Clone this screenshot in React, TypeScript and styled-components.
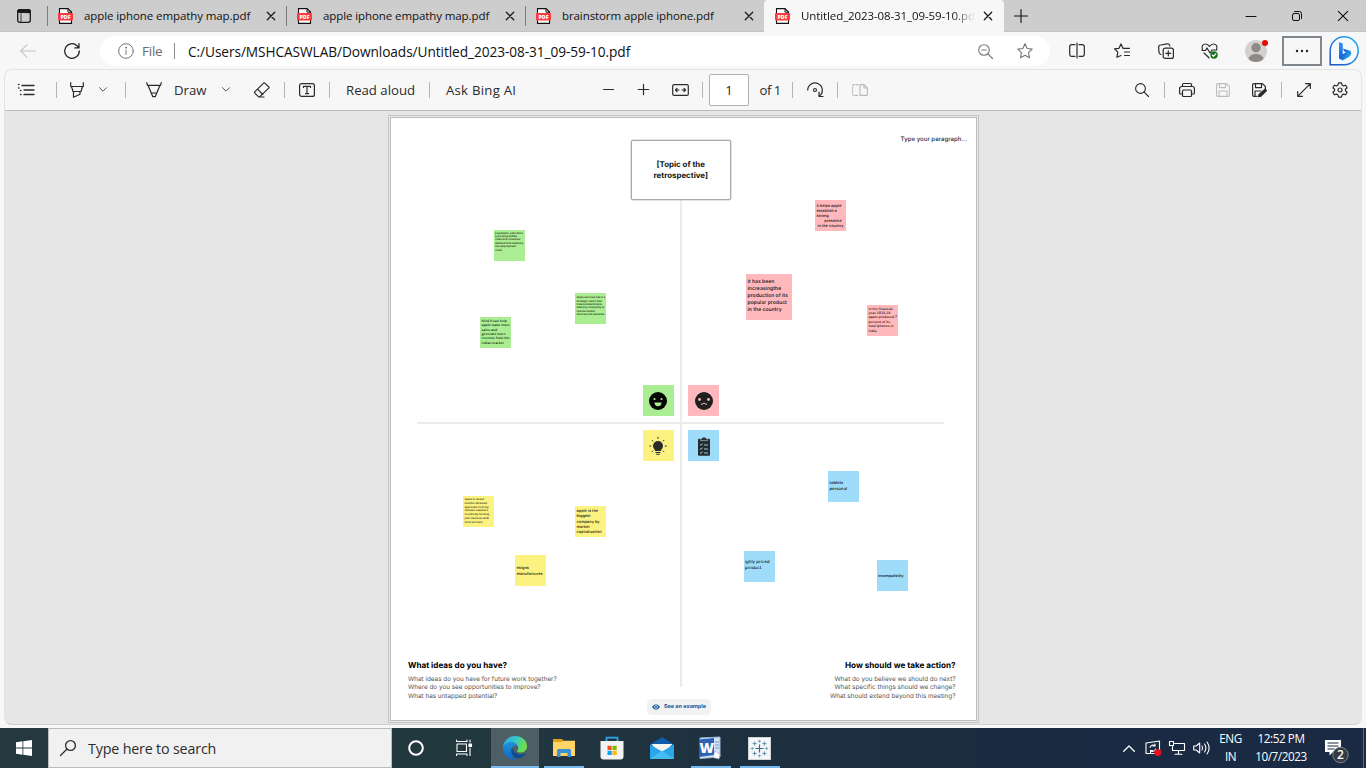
import React from 'react';
import styled, { createGlobalStyle, css } from 'styled-components';

const Global = createGlobalStyle`
  * { box-sizing: border-box; }
  html, body { margin: 0; padding: 0; overflow: hidden; }
  body { font-family: "Open Sans", "Noto Sans", sans-serif; color: #1b1b1b; }
  svg { display: block; flex: none; overflow: visible; }
`;

const Window = styled.div`
  width: 1366px; height: 768px; display: flex; flex-direction: column;
  background: #f7f7f7; overflow: hidden;
`;

/* ---------- generic pieces ---------- */
const Cell = styled.div<{ $w: number; $ml?: number; $color?: string }>`
  width: ${p => p.$w}px; margin-left: ${p => p.$ml ?? 0}px; flex: none; height: 100%;
  display: flex; align-items: center; justify-content: center;
  color: ${p => p.$color ?? '#2b2b2b'};
`;
const Spacer = styled.div`flex: 1;`;
const Rule = styled.i<{ $h: number; $color?: string }>`
  width: 1px; height: ${p => p.$h}px; background: ${p => p.$color ?? '#b5b5b5'}; flex: none;
`;

type IconProps = { w?: number; h?: number; sw?: number; children: React.ReactNode };
const Icon = ({ w = 16, h, sw = 1.1, children }: IconProps) => (
  <svg width={w} height={h ?? w} viewBox={`0 0 ${w} ${h ?? w}`} fill="none" stroke="currentColor"
    strokeWidth={sw} strokeLinecap="round" strokeLinejoin="round">{children}</svg>
);
const CloseIcon = () => <Icon w={8} sw={1.3}><path d="M.3.3l7.4 7.4M7.7.3L.3 7.7" /></Icon>;
const Chevron = () => <Icon w={8} h={5} sw={1}><path d="M.5.7L4 4.2 7.500.7" /></Icon>;

/* ---------- tab strip ---------- */
const TabStrip = styled.div`
  height: 32px; flex: none; display: flex; background: #cdcdcd;
  box-shadow: inset 0 -1px 0 #c3c3c3;
`;
const Tab = styled.div<{ $active?: boolean }>`
  width: ${p => (p.$active ? 240 : 239)}px; height: 32px; flex: none; display: flex; align-items: center;
  ${p => p.$active
    ? css`background: #f7f7f7; border-radius: 4px 4px 0 0; padding-left: 11px;`
    : css`padding-left: 0;`}
`;
const TabDivider = styled.i`width: 1px; height: 20px; background: #7c7c7c; margin-right: 10px;`;
const TabTitle = styled.span<{ $fade?: boolean; $ls: number }>`
  width: 174px; margin-left: 10px; font-size: 11.5px; line-height: 20px; white-space: nowrap; overflow: hidden;
  letter-spacing: ${p => p.$ls}px; color: #111; flex: none; padding-bottom: 1px;
  ${p => p.$fade && css`
    width: 174px;
    mask-image: linear-gradient(90deg, #000 152px, transparent 174px);
  `}
`;
const TabClose = styled.span`width: 26px; display: flex; justify-content: center;`;

const PdfIcon = () => (
  <svg width="16" height="16" viewBox="0 0 16 16">
    <path d="M1.500.6H10l3.500 3.500V15.400H1.500z" fill="#fff" stroke="#111" strokeWidth="1.100" />
    <path d="M10 .6v3.600h3.600" fill="none" stroke="#111" />
    <rect x="0" y="5" width="15" height="7.500" rx="1" fill="#fb3b3b" />
    <text x="7.500" y="10.700" fontSize="5.200" fontWeight="800" fill="#fff" textAnchor="middle"
      fontFamily="Open Sans">PDF</text>
  </svg>
);

/* ---------- address row ---------- */
const AddressRow = styled.div`height: 38px; flex: none; display: flex; align-items: center; padding-bottom: 0;`;
const AddressBar = styled.div`
  width: 950px; height: 30px; margin-left: 12px; border-radius: 15px; background: #fff;
  display: flex; align-items: center; padding: 0 5px 0 12px; flex: none;
`;
const FileLabel = styled.span`width: 34px; padding-left: 2px; font-size: 13.5px; letter-spacing: -.25px; color: #6a6a6a;`;
const Url = styled.span`
  padding-left: 13px; font-size: 13.7px; letter-spacing: -.08px; color: #111; white-space: nowrap;
`;
const MoreButton = styled.div`
  width: 40px; height: 30px; margin-left: 3px; border: 2px solid #7f868d; background: #f7f7f7; flex: none;
  display: flex; align-items: center; justify-content: center;
`;

/* ---------- pdf viewer ---------- */
const Viewer = styled.div`
  height: 656px; margin: -1px 4px 0; flex: none; border: 1px solid #e3e3e3; border-bottom-color: #cfcfcf;
  border-radius: 8px; overflow: hidden; display: flex; flex-direction: column; background: #e6e6e6;
`;
const PdfBar = styled.div`
  height: 41px; flex: none; display: flex; align-items: center; background: #f7f7f7;
  border-bottom: 1px solid #bdbdbd; padding-right: 3px; padding-bottom: 1px;
`;
const BarText = styled.span<{ $w: number; $pl?: number; $ls?: number }>`
  width: ${p => p.$w}px; padding-left: ${p => p.$pl ?? 0}px; flex: none; white-space: nowrap;
  font-size: 13.2px; letter-spacing: ${p => p.$ls ?? 0}px; color: #2b2b2b;
`;
const PageInput = styled.div`
  width: 40px; height: 32px; margin-left: 4px; border: 1px solid #b0b0b0; border-radius: 2px; background: #fff;
  display: flex; align-items: center; justify-content: center; font-size: 13px; flex: none;
`;
const Scroll = styled.div`flex: 1; display: flex; justify-content: center; align-items: flex-start; padding: 4px 0 0; `;
const PaperFrame = styled.div`
  width: 591px; height: 608px; margin-left: 0; border: 1px solid #c4c4c4; padding: 1px; background: #e9e9e9; flex: none;
`;
const Paper = styled.div`
  width: 100%; height: 100%; position: relative; background: #fff; border: 1px solid #bcbcbc;
  font-family: "Inter", "Liberation Sans", sans-serif; color: #111; text-rendering: geometricPrecision;
  display: flex; flex-direction: column; justify-content: flex-end;
`;
/* Items on the board sit at free canvas coordinates measured from the page corner. */
const OnBoard = styled.div<{ $x: number; $y: number; $w: number; $h: number }>`
  position: absolute; left: ${p => p.$x - 390.5}px; top: ${p => p.$y - 118}px;
  width: ${p => p.$w}px; height: ${p => p.$h}px;
`;
const Axis = styled(OnBoard)`background: #ebebeb;`;
const Topic = styled(OnBoard)`
  border: 1px solid #a9a9a9; box-shadow: 0 0 0 .5px #c9c9c9; border-radius: 2px; background: #fff;
  display: flex; align-items: center; justify-content: center; text-align: center;
  font-size: 7.9px; line-height: 11px; font-weight: 700;
`;
const Hint = styled(OnBoard)`
  font-size: 6.1px; line-height: 10px; text-align: right; color: #222b4a; white-space: nowrap; font-weight: 500;
`;
const Note = styled(OnBoard)<{ $bg: string; $fs: number; $lh: number; $pt: number }>`
  background: ${p => p.$bg}; padding: ${p => p.$pt}px 0 0 1.5px; white-space: pre;
  font-size: ${p => p.$fs}px; line-height: ${p => p.$lh}px; font-weight: 600; color: rgba(0, 0, 0, .85);
`;
const Tile = styled(OnBoard)<{ $bg: string }>`
  background: ${p => p.$bg}; display: flex; align-items: center; justify-content: center;
`;
const Prompts = styled.div`display: flex; justify-content: space-between; padding: 0 20px 0 17.5px; height: 40px; margin-bottom: 20px;`;
const Prompt = styled.div<{ $right?: boolean }>`
  text-align: ${p => (p.$right ? 'right' : 'left')}; font-size: 6.35px; line-height: 8.5px; color: #555; white-space: pre-line;
`;
const PromptTitle = styled.div`font-size: 8.15px; line-height: 10px; font-weight: 700; color: #000; margin-bottom: 4.500px;`;
const Example = styled(OnBoard)`
  border-radius: 5px; background: #f1f2f3; display: flex; align-items: center; justify-content: center; gap: 4px;
  font-size: 5.5px; font-weight: 700; color: #14599a; white-space: nowrap;
`;

const GREEN = '#aaed92', PINK = '#ffb8bb', YELLOW = '#fcf281', BLUE = '#9edcfa';
type NoteData = [number, number, number, string, number, number, number, string];
const notes: NoteData[] = [
  [493.5, 230, 31, GREEN, 2.65, 3.35, 1.8, 'population ,education\na growing middle\nclass and consumer\ndemand and relatively\nlow employment\ncosts'],
  [575, 293, 31, GREEN, 2.65, 3.4, 3.2, 'apple services lies in a\nstrategic vision that\ntranscended simple\ndesiring computing to\nremote mobile\ndevices and wearable'],
  [480, 317, 31, GREEN, 3.4, 4.4, 1.8, 'third it can help\napple make more\nsales and\ngenerate more\nrevenue from the\nindian market'],
  [815, 200, 31, PINK, 3.9, 5, 3, 'it helps apple\nestablish a\nstrong\n        presence\n in the country'],
  [746, 273.5, 46, PINK, 5.1, 7, 5, 'it has been\nincreasingthe\nproduction of its\npopular product\nin the country'],
  [867, 304.5, 31, PINK, 3.4, 4.4, 2, 'in the financial\nyear 2023,23\napple produced 7\npercent of its\ntotal iphones in\nindia'],
  [463, 496, 31, YELLOW, 2.75, 3.75, 2, 'apple in recent\nmonths obtained\napprovals to bring\nchinese suppliers\nto india by forming\njoint ventures with\nlocal partners'],
  [575, 506, 31, YELLOW, 3.9, 5.3, 2, 'apple is the\nbiggest\ncompany by\nmarket\ncapitalization'],
  [515, 555, 31, YELLOW, 3.9, 6, 9.5, 'esigns\nmanufactures'],
  [828, 471, 31, BLUE, 4.2, 6, 9.5, 'tablets\npersonal'],
  [743.5, 550.5, 31, BLUE, 4.3, 6, 9.5, 'ighly priced\nproduct'],
  [876.5, 559.5, 31, BLUE, 3.6, 6, 13, 'incompatibility'],
];

const Happy = () => (
  <svg width="18" height="18" viewBox="0 0 18 18">
    <circle cx="9" cy="9" r="9" fill="#050505" />
    <circle cx="5.500" cy="7" r="1.100" fill={GREEN} /><circle cx="12.500" cy="7" r="1.100" fill={GREEN} />
    <path d="M5.500 10.500h7a3.500 3.700 0 0 1-7 0z" fill={GREEN} />
  </svg>
);
const Sad = () => (
  <svg width="18" height="18" viewBox="0 0 18 18">
    <circle cx="9" cy="9" r="9" fill="#1f1f1f" />
    <circle cx="4.500" cy="7.500" r="1.400" fill={PINK} /><circle cx="13.500" cy="7.500" r="1.400" fill={PINK} />
    <path d="M6 12.500q3-2.600 6 0" fill="none" stroke={PINK} strokeWidth="1" />
  </svg>
);
const Bulb = () => (
  <svg width="18" height="18" viewBox="0 0 18 18" fill="#2b2b2b" stroke="#2b2b2b">
    <path d="M9 4a5 5 0 0 0-5 5c0 2.300 1.800 3.200 2.200 5h5.600c.4-1.800 2.200-2.700 2.200-5a5 5 0 0 0-5-5z" stroke="none" />
    <path d="M6.500 15.500h5M7.200 17.300h3.600" strokeWidth="1" />
    <path d="M9-.2v2.200M.2 9h2.100M15.700 9h2.100M2.800 3l1.400 1.400M15.200 3l-1.400 1.400M2.800 15l1.400-1.400M15.200 15l-1.400-1.400" strokeWidth=".9" />
  </svg>
);
const Clipboard = () => (
  <svg width="14" height="20" viewBox="0 0 14 20">
    <rect x="1" y="2.800" width="12" height="17" rx="1" fill="#262b2e" />
    <path d="M3.500 4.600V2.400h1.600a2 2 0 0 1 3.800 0h1.600v2.200z" fill="#262b2e" stroke={BLUE} strokeWidth=".6" />
    <path d="M3 8.500l1 .9 1.500-1.800M7 9h4M3 12.500l1 .9 1.500-1.800M7 13h4M3 16.500l1 .9 1.500-1.800M7 17h4" fill="none" stroke={BLUE} strokeWidth=".9" />
  </svg>
);

/* ---------- taskbar ---------- */
const Taskbar = styled.div`
  height: 40px; margin-top: auto; flex: none; display: flex; color: #fff;
  background: linear-gradient(90deg, #23393f 0%, #22383f 35%, #1d303f 55%, #1a2a42 80%, #1a2a43 100%);
`;
const SearchBox = styled.div`
  width: 344px; height: 40px; background: #f1f1f1; border: 1px solid #b9bcbd; display: flex; align-items: center; flex: none;
  padding-left: 11px; font-size: 14.3px; letter-spacing: -.18px; color: #2d2d2d; gap: 12px;
`;
const TaskItem = styled.div<{ $w: number; $ml?: number; $open?: boolean; $active?: boolean; $shift?: number }>`
  width: ${p => p.$w}px; margin-left: ${p => p.$ml ?? 0}px; height: 40px; flex: none;
  display: flex; align-items: center; justify-content: center; padding-right: ${p => p.$shift ?? 0}px;
  background: ${p => (p.$active ? '#4d5f65' : 'transparent')};
  box-shadow: ${p => (p.$open ? 'inset 0 -2px 0 #76b9ed' : 'none')};
`;
const TrayText = styled.div<{ $w: number }>`
  width: ${p => p.$w}px; display: flex; flex-direction: column; justify-content: center; text-align: center; flex: none;
  font-size: 11.7px; line-height: 18px; letter-spacing: -.42px; white-space: nowrap; padding-bottom: 2px;
`;

const Edge = () => (
  <svg width="24" height="24" viewBox="0 0 24 24">
    <defs>
      <linearGradient id="e1" x1="0" y1="0" x2="1" y2=".3"><stop offset="0" stopColor="#2fa5e6" /><stop offset=".5" stopColor="#35c3cf" /><stop offset="1" stopColor="#6be04f" /></linearGradient>
      <linearGradient id="e2" x1="0" y1="0" x2="0" y2="1"><stop offset="0" stopColor="#1d93dd" /><stop offset="1" stopColor="#1265bf" /></linearGradient>
    </defs>
    <path d="M0 11.500C.5 5 5.500 0 12 0c7 0 12 4.800 12 10.200 0 4-3 6.300-6.300 6.300-2.600 0-3.900-.9-3.700-1.700.2-.6 1.200-1 1.200-2.900C15.200 9 12 6.400 8.200 6.400 4.500 6.400 1.500 8.300 0 11.500z" fill="url(#e1)" />
    <path d="M0 12c.7-3.700 4.300-5.700 8.200-5.700 3 0 5.600 1.600 6.600 3.700-1-.7-4-.8-5.600 1.400-2.300 3.100-1.300 9.500 4.200 12.500C6 24.800.1 19.300 0 12z" fill="url(#e2)" />
    <path d="M9.200 11.400c-2.600 4.600.8 12 8 10.700 2.300-.6 4.300-2.300 5.300-4 .3-.6-.2-.9-.7-.6-5 2.500-11.600.3-12.600-6.100z" fill="#0c4d93" />
  </svg>
);
const Folder = () => (
  <svg width="22" height="18" viewBox="0 0 22 18">
    <path d="M0 0h9l1.500 2H22v3H0z" fill="#e3a21a" /><path d="M0 3h9l1-1.300h12V17H0z" fill="#ffd567" />
    <path d="M4 18v-6.500a1.500 1.500 0 0 1 1.500-1.500h11a1.500 1.500 0 0 1 1.500 1.500V18h-3.500v-4h-7v4z" fill="#3a8fd6" />
  </svg>
);
const Store = () => (
  <svg width="24" height="24" viewBox="0 0 24 24">
    <path d="M6.500 6V1.700h11V6" fill="none" stroke="#29a8e8" strokeWidth="1.800" />
    <path d="M.5 5h23v15.500a3 3 0 0 1-3 3h-17a3 3 0 0 1-3-3z" fill="#f3f3f3" />
    <path d="M7.500 9.800h4.200V14H7.500z" fill="#f25022" /><path d="M12.500 9.800h4.200V14h-4.200z" fill="#7fba00" />
    <path d="M7.500 14.800h4.200V19H7.500z" fill="#00a4ef" /><path d="M12.500 14.800h4.200V19h-4.200z" fill="#ffb900" />
  </svg>
);
const Mail = () => (
  <svg width="24" height="22" viewBox="0 0 24 22">
    <path d="M0 7.500L12 0l12 7.500V12H0z" fill="#0f5ca8" /><path d="M1.500 7h21l-7 8h-8z" fill="#f5f5f5" />
    <path d="M0 7.500l12 7 12-7V22H0z" fill="#2aa5e8" /><path d="M0 22L12 13.500 24 22z" fill="#45bdf2" />
  </svg>
);
const Word = () => (
  <svg width="23" height="23" viewBox="0 0 23 23">
    <path d="M2 1l20-1v20l-20 1.500z" fill="#d5e3f5" stroke="#9db8dd" />
    <path d="M17 5h4M17 8h4M17 11h4" stroke="#6f95cc" />
    <path d="M1 2.500L16 1v17L1 20z" fill="#2c62b5" />
    <text x="8.700" y="15.500" fontSize="14" fontWeight="800" fontFamily="Open Sans" fill="#fff" textAnchor="middle">W</text>
    <path d="M17 14l5 3-1 5-6-1.500z" fill="#fff" stroke="#8da9d2" strokeWidth=".7" />
  </svg>
);
const plus = (x: number, y: number, r: number) => `M${x - r} ${y}h${2 * r}M${x} ${y - r}v${2 * r}`;
const Tableau = () => (
  <svg width="23" height="23" viewBox="0 0 23 23" fill="none">
    <rect x=".5" y=".5" width="22" height="22" fill="#f4f6f7" stroke="#cfd6da" />
    <path d={plus(11.5, 11.5, 4)} stroke="#376a8a" strokeWidth="1.200" />
    <path d={[plus(11.5, 4.3, 1.6), plus(11.5, 18.7, 1.6), plus(4.3, 11.5, 1.6), plus(18.7, 11.5, 1.6)].join('')} stroke="#7fa8bf" />
    <path d={[plus(6.6, 6.6, 2), plus(16.4, 6.6, 2), plus(6.6, 16.4, 2), plus(16.4, 16.4, 2)].join('')} stroke="#5b91af" />
  </svg>
);

export default function App() {
  const tabs = ['apple iphone empathy map.pdf', 'apple iphone empathy map.pdf', 'brainstorm apple iphone.pdf'];
  return (
    <Window>
      <Global />
      <TabStrip>
        <Cell $w={47} $color="#1a1a1a">
          <Icon w={14} sw={1.3}><rect x=".7" y=".7" width="12.600" height="12.600" rx="2" /><path d="M.7 3.200V2.700a2 2 0 0 1 2-2h8.600a2 2 0 0 1 2 2v.8z" fill="currentColor" /><path d="M4 4v9" strokeWidth=".8" /></Icon>
        </Cell>
        {tabs.map((title, i) => (
          <Tab key={i}>
            <TabDivider /><PdfIcon /><TabTitle $ls={-0.09}>{title}</TabTitle><TabClose><CloseIcon /></TabClose>
          </Tab>
        ))}
        <Tab $active>
          <PdfIcon /><TabTitle $fade $ls={-0.1}>Untitled_2023-08-31_09-59-10.pdf</TabTitle><TabClose><CloseIcon /></TabClose>
        </Tab>
        <Cell $w={34} $color="#111"><Icon w={14} sw={1.1}><path d="M7 .5v13M.5 7h13" /></Icon></Cell>
        <Spacer />
        <Cell $w={46} $color="#111"><Icon w={10} sw={1}><path d="M0 5.500h10" /></Icon></Cell>
        <Cell $w={46} $color="#111"><Icon w={10} sw={1}><rect x=".5" y="2.500" width="7" height="7" rx="1.500" /><path d="M2.500.5h5a2 2 0 0 1 2 2v5" /></Icon></Cell>
        <Cell $w={46} $color="#111"><Icon w={10} sw={1.1}><path d="M.3.3l9.400 9.400M9.700.3L.3 9.700" /></Icon></Cell>
      </TabStrip>

      <AddressRow>
        <Cell $w={56} $color="#c6c6c6"><Icon w={16}><path d="M15.500 8H.8M7 1.700L.7 8 7 14.300" /></Icon></Cell>
        <Cell $w={32} $color="#222"><Icon w={16} sw={1.3}><path d="M15.300 8A7.300 7.300 0 1 1 13 2.700L14.800 4.800M15 .7v4.200h-4.200" /></Icon></Cell>
        <AddressBar>
          <Cell $w={28} $color="#767676"><Icon w={16} sw={1}><circle cx="8" cy="8" r="7.300" /><path d="M8 7v4.500" /><circle cx="8" cy="4.700" r=".5" fill="currentColor" /></Icon></Cell>
          <FileLabel>File</FileLabel><Rule $h={16} $color="#8a8a8a" />
          <Url>C:/Users/MSHCASWLAB/Downloads/Untitled_2023-08-31_09-59-10.pdf</Url>
          <Spacer />
          <Cell $w={40} $color="#767676"><Icon w={15}><circle cx="6" cy="6" r="5.300" /><path d="M10 10l4.500 4.500M3.700 6h4.600" /></Icon></Cell>
          <Cell $w={40} $color="#767676"><Icon w={16}><path d="M8 .8l2.200 4.700 5 .6-3.700 3.500 1 5.100L8 12.200l-4.500 2.500 1-5.100L.8 6.100l5-.6z" /></Icon></Cell>
        </AddressBar>
        <Cell $w={44} $ml={5}><Icon w={16} sw={1.2}><path d="M6 1.700H2.500a1.800 1.800 0 0 0-1.800 1.800v8a1.800 1.800 0 0 0 1.800 1.800H6M10 1.700h3.500a1.800 1.800 0 0 1 1.800 1.800v8a1.800 1.800 0 0 1-1.800 1.800H10M8 0v15" /></Icon></Cell>
        <Cell $w={46}><Icon w={16} sw={1.2}><path d="M9 5.300L7 .9 5 5.300l-4.500.6 3.300 3.300-.9 5L7 12.500M9 5.300h6.500M10.500 9h5M10.500 12.500h5" /></Icon></Cell>
        <Cell $w={42}><Icon w={16} sw={1.2}><rect x="5.200" y="5.200" width="10.200" height="10.200" rx="2" /><path d="M10.300 7.800v5M7.800 10.300h5M3 11.500C1.800 11.200 1.300 10.500 1 9.300L.6 4.600A2.400 2.400 0 0 1 2.700 2l6.500-1.200c1.400-.2 2.300.6 2.700 2" /></Icon></Cell>
        <Cell $w={46}>
          <Icon w={18} h={16} sw={1.2}><path d="M1.500 7C0 3 2 1 4.500 1 6.500 1 7.500 2 8.500 3.300 9.500 2 10.500 1 12.500 1 15 1 17 3 15.500 7M1 7.500h3.500L6 5l3 5 2-3h5M3 10l5 4.800" /><circle cx="13" cy="12" r="3.700" fill="#12751a" stroke="none" /><path d="M11.300 12.200l1.200 1.200 2.200-2.600" stroke="#fff" /></Icon>
        </Cell>
        <Cell $w={46}>
          <svg width="22" height="22" viewBox="0 0 22 22"><clipPath id="av"><circle cx="11" cy="11" r="11" /></clipPath><circle cx="11" cy="11" r="11" fill="#d3d1cf" /><g clipPath="url(#av)" fill="#8d8a88"><circle cx="11" cy="7.700" r="4.700" /><ellipse cx="11" cy="19" rx="7.500" ry="5" /></g><circle cx="20" cy="3" r="3" fill="#e00b0b" /></svg>
        </Cell>
        <MoreButton><Icon w={14} h={4}><g fill="#222" stroke="none"><circle cx="2" cy="2" r="1.200" /><circle cx="7" cy="2" r="1.200" /><circle cx="12" cy="2" r="1.200" /></g></Icon></MoreButton>
        <Cell $w={34} $ml={5}>
          <svg width="30" height="30" viewBox="0 0 30 30">
            <defs><linearGradient id="b1" x1="0" y1="1" x2="1" y2="0"><stop offset="0" stopColor="#1b4fc4" /><stop offset="1" stopColor="#2cb5ec" /></linearGradient>
              <linearGradient id="b2" x1="0" y1="0" x2="1" y2="1"><stop offset="0" stopColor="#2f9cf2" /><stop offset=".5" stopColor="#1a66d8" /><stop offset="1" stopColor="#37c5ee" /></linearGradient></defs>
            <path d="M1.200 28.800V15A14 14 0 1 1 15 28.800z" fill="#f5fafe" stroke="url(#b1)" strokeWidth="1.500" />
            <path d="M10 6l3.700 1.400v10.800L17 16.300l-2-1-1.100-2.900 7.600 2.700c1.700 2.500.2 5-1.700 6l-6.200 3.500L10 22.500z" fill="url(#b2)" />
          </svg>
        </Cell>
      </AddressRow>

      <Viewer>
        <PdfBar>
          <Cell $w={42}><Icon w={16} h={12} sw={1.3}><path d="M4 1.500h12M6 6h10M6 10.500h10M.5.5h.5M.5 4h.5M2.500 6.500h.5M2.500 10.500h.5" /></Icon></Cell>
          <Cell $w={19}><Rule $h={16} /></Cell>
          <Cell $w={22}><Icon w={14} h={16} sw={1.2}><path d="M.7.500V4.500h12.600V.5M1.500 4.500L3 9.500h8l1.500-5M3.500 9.500v5.800l6.500-3V9.500" /></Icon></Cell>
          <Cell $w={30} $color="#555"><Chevron /></Cell>
          <Cell $w={15}><Rule $h={16} /></Cell>
          <Cell $w={41}><Icon w={16} sw={1.2}><path d="M.7.7L1.500 3.300h13L15.300.7M2 3.300l4.800 11.400h2.400L14 3.300M5.500 11h5" /></Icon></Cell>
          <BarText $w={34}>Draw</BarText>
          <Cell $w={36} $color="#555"><Chevron /></Cell>
          <Cell $w={36}><Icon w={16} sw={1.2}><path d="M9.300 1.300L.9 9.700a1 1 0 0 0 0 1.400l3.500 3.500a1 1 0 0 0 1.400 0l8.900-8.500a1 1 0 0 0 0-1.400l-4-3.600a1 1 0 0 0-1.400.2zM3.500 7.200l5.300 5.300M5 15h5" /></Icon></Cell>
          <Cell $w={9}><Rule $h={16} /></Cell>
          <Cell $w={36}><Icon w={16} h={14} sw={1.2}><rect x=".6" y=".6" width="14.800" height="12.800" rx="2" /><path d="M4.500 4.500V3.300h7v1.200M8 3.300v7.400M6.500 10.700h3" /></Icon></Cell>
          <Cell $w={9}><Rule $h={16} /></Cell>
          <BarText $w={90} $pl={12}>Read aloud</BarText>
          <Cell $w={11}><Rule $h={16} /></Cell>
          <BarText $w={155} $pl={11} $ls={0.25}>Ask Bing AI</BarText>
          <Cell $w={36}><Icon w={11} sw={1.2}><path d="M.5 5.500h10" /></Icon></Cell>
          <Cell $w={35}><Icon w={11} sw={1.2}><path d="M.3 5.500h10.400M5.500.3v10.400" /></Icon></Cell>
          <Cell $w={39}><Icon w={17} h={12} sw={1.2}><rect x=".7" y=".6" width="15.600" height="10.800" rx="1.500" /><path d="M3.500 6H7M10 6h3.500M5 4.500L3.500 6 5 7.500M12 4.500L13.500 6 12 7.500" /></Icon></Cell>
          <Cell $w={5}><Rule $h={16} /></Cell>
          <PageInput>1</PageInput>
          <BarText $w={39} $pl={10.5} $ls={-0.5}>of 1</BarText>
          <Cell $w={9}><Rule $h={16} /></Cell>
          <Cell $w={36}><Icon w={16} sw={1.2}><path d="M.7 8A7.300 7.300 0 1 1 12.500 14M12 10v4.500h4" /><circle cx="8" cy="8" r="1.500" /></Icon></Cell>
          <Cell $w={9}><Rule $h={16} /></Cell>
          <Cell $w={36} $color="#b9b9b9"><Icon w={16} h={12} sw={1.1}><path d="M8 .6h4.200l3.200 3.200v6.600a1 1 0 0 1-1 1H8zM12 .6V4h3.400" /><path d="M6 .6H2A1.400 1.400 0 0 0 .6 2v8A1.400 1.400 0 0 0 2 11.400h4" strokeDasharray="2 1.500" /></Icon></Cell>
          <Spacer />
          <Cell $w={36}><Icon w={14} sw={1.1}><circle cx="5.500" cy="5.500" r="4.900" /><path d="M9.200 9.200l4.300 4.300" /></Icon></Cell>
          <Cell $w={9}><Rule $h={16} /></Cell>
          <Cell $w={36}><Icon w={16} h={14} sw={1.2}><path d="M3.500 3.500V1.500a1 1 0 0 1 1-1h7a1 1 0 0 1 1 1v2M3 11H1.600a1 1 0 0 1-1-1V5.500a2 2 0 0 1 2-2h10.800a2 2 0 0 1 2 2V10a1 1 0 0 1-1 1H13" /><rect x="3.500" y="7" width="9" height="6.500" rx="1" /></Icon></Cell>
          <Cell $w={36} $color="#bcbcbc"><Icon w={14} sw={1.1}><path d="M2 .6h8.500l2.900 2.900V12a1.400 1.400 0 0 1-1.400 1.400H2A1.400 1.400 0 0 1 .6 12V2A1.400 1.400 0 0 1 2 .6zM3.500.6v4h6v-4M3 13.400V8h8v5.400" /></Icon></Cell>
          <Cell $w={36}><Icon w={15} h={14} sw={1.2}><path d="M5 13.400H2A1.400 1.400 0 0 1 .6 12V2A1.400 1.400 0 0 1 2 .6h8.500l2.900 2.900V6M3.500.6v4h6v-4M3 13.400V8h6" /><path d="M6.500 13.700l.6-2.200L13 6.200l1.500 1.500-5.500 5.500z" fill="currentColor" /></Icon></Cell>
          <Cell $w={9}><Rule $h={16} /></Cell>
          <Cell $w={36}><Icon w={14} sw={1.2}><path d="M.7 13.300L13.300.7M8.500.7h4.800v4.800M.7 8.500v4.800h4.800" /></Icon></Cell>
          <Cell $w={36}><Icon w={16} sw={1.2}><path d="M6.500.8h3l.5 2.300 1.400.8 2.200-.7 1.500 2.600-1.700 1.500v1.400l1.700 1.500-1.500 2.600-2.200-.7-1.400.8-.5 2.300h-3L6 12.900l-1.400-.8-2.200.7L.9 10.200l1.700-1.500V7.300L.9 5.800l1.500-2.600 2.200.7L6 3.100z" /><circle cx="8" cy="8" r="2" /></Icon></Cell>
        </PdfBar>
        <Scroll>
          <PaperFrame>
            <Paper>
              <Axis $x={680} $y={199} $w={2} $h={488} />
              <Axis $x={417} $y={422} $w={527} $h={2} />
              <Topic $x={631} $y={140} $w={99.5} $h={59.5}>[Topic of the<br />retrospective]</Topic>
              <Hint $x={880} $y={135} $w={87} $h={10}>Type your paragraph...</Hint>
              {notes.map(([x, y, s, bg, fs, lh, pt, text], i) => (
                <Note key={i} $x={x} $y={y} $w={s} $h={s} $bg={bg} $fs={fs} $lh={lh} $pt={pt}>{text}</Note>
              ))}
              <Tile $x={642.5} $y={385} $w={31} $h={31} $bg={GREEN}><Happy /></Tile>
              <Tile $x={688} $y={385} $w={31} $h={31} $bg={PINK}><Sad /></Tile>
              <Tile $x={642.5} $y={430} $w={31} $h={31} $bg={YELLOW}><Bulb /></Tile>
              <Tile $x={688} $y={430} $w={31} $h={31} $bg={BLUE}><Clipboard /></Tile>
              <Prompts>
                <Prompt>
                  <PromptTitle>What ideas do you have?</PromptTitle>
                  {'What ideas do you have for future work together?\nWhere do you see opportunities to improve?\nWhat has untapped potential?'}
                </Prompt>
                <Prompt $right>
                  <PromptTitle>How should we take action?</PromptTitle>
                  {'What do you believe we should do next?\nWhat specific things should we change?\nWhat should extend beyond this meeting?'}
                </Prompt>
              </Prompts>
              <Example $x={647} $y={699} $w={64} $h={16}>
                <svg width="8" height="6" viewBox="0 0 8 6"><path d="M0 3q4-5.500 8 0-4 5.500-8 0z" fill="#14599a" /><circle cx="4" cy="3" r="1.700" fill="#fff" /><circle cx="4" cy="3" r="1" fill="#14599a" /></svg>
                See an example
              </Example>
            </Paper>
          </PaperFrame>
        </Scroll>
      </Viewer>

      <Taskbar>
        <Cell $w={48}>
          <svg width="16" height="16" viewBox="0 0 16 16" fill="#fff"><path d="M0 2.300L6.500 1.300V7.600H0zM7.300 1.200L16 0v7.600H7.300zM0 8.400h6.500v6.300L0 13.700zM7.300 8.400H16V16l-8.700-1.200z" /></svg>
        </Cell>
        <SearchBox>
          <Icon w={16} sw={1.3}><circle cx="10.500" cy="5.500" r="4.900" /><path d="M7 9L.5 15.500" /></Icon>
          Type here to search
        </SearchBox>
        <TaskItem $w={48}><Icon w={16} sw={2}><circle cx="8" cy="8" r="6.800" /></Icon></TaskItem>
        <TaskItem $w={47}><Icon w={16} sw={1.1}><rect x="1" y="4" width="9.500" height="7.500" /><path d="M.5 0v1.500h10.500V0M.5 15.500V14h10.500v1.500M14 0v2M14 8v7.500" /><rect x="13" y="4" width="2.500" height="2.500" fill="#fff" /></Icon></TaskItem>
        <TaskItem $w={48} $ml={4} $open $active><Edge /></TaskItem>
        <TaskItem $w={40} $ml={5} $open><Folder /></TaskItem>
        <TaskItem $w={48} $ml={4}><Store /></TaskItem>
        <TaskItem $w={48} $ml={2}><Mail /></TaskItem>
        <TaskItem $w={40} $ml={5} $open $shift={3}><Word /></TaskItem>
        <TaskItem $w={40} $ml={9} $open $shift={2}><Tableau /></TaskItem>
        <Spacer />
        <TaskItem $w={24}><Icon w={12} h={7} sw={1.3}><path d="M.7 6.300L6 1l5.300 5.300" /></Icon></TaskItem>
        <TaskItem $w={24}><Icon w={16} sw={1.1}><path d="M1 3l13.500-2v10M1 3v10.500h8M5 7.500a3 3 0 0 1 5-1.500M10 4v2H8M10.500 9a3 3 0 0 1-5 1.500M5.500 12.500v-2h2" /><circle cx="12.800" cy="12.500" r="3.600" fill="#e81123" stroke="none" /></Icon></TaskItem>
        <TaskItem $w={24}><Icon w={16} h={14} sw={1.1}><path d="M5.500 2.500h10v7H3.500V5.500M9.500 9.500v3.500M6 13.300h7" /><rect x=".5" y=".5" width="4" height="4" /></Icon></TaskItem>
        <TaskItem $w={24}><Icon w={17} h={14} sw={1.1}><path d="M.7 5v4h2.500l3.500 3V2L3.200 5zM9 5q1.300 2 0 4M11.500 3q2.800 4 0 8M14 1q4.300 6 0 12" /></Icon></TaskItem>
        <TrayText $w={35}><span>ENG</span><span>IN</span></TrayText>
        <TrayText $w={66}><span>12:52 PM</span><span>10/7/2023</span></TrayText>
        <TaskItem $w={47} $shift={2}>
          <svg width="26" height="26" viewBox="0 0 26 26"><path d="M1 5h16v12H9l-3.500 3.500V17H1z" fill="#fff" /><path d="M3.500 8h11M3.500 11h11M3.500 14h7" stroke="#1a2a42" /><circle cx="16.500" cy="20" r="7.700" fill="#343b42" stroke="#7d848a" /><text x="16.500" y="24.200" fontSize="12" fill="#fff" fontWeight="600" textAnchor="middle" fontFamily="Open Sans">2</text></svg>
        </TaskItem>
        <Cell $w={5}><Rule $h={40} $color="#5d6a7a" /></Cell>
      </Taskbar>
    </Window>
  );
}
